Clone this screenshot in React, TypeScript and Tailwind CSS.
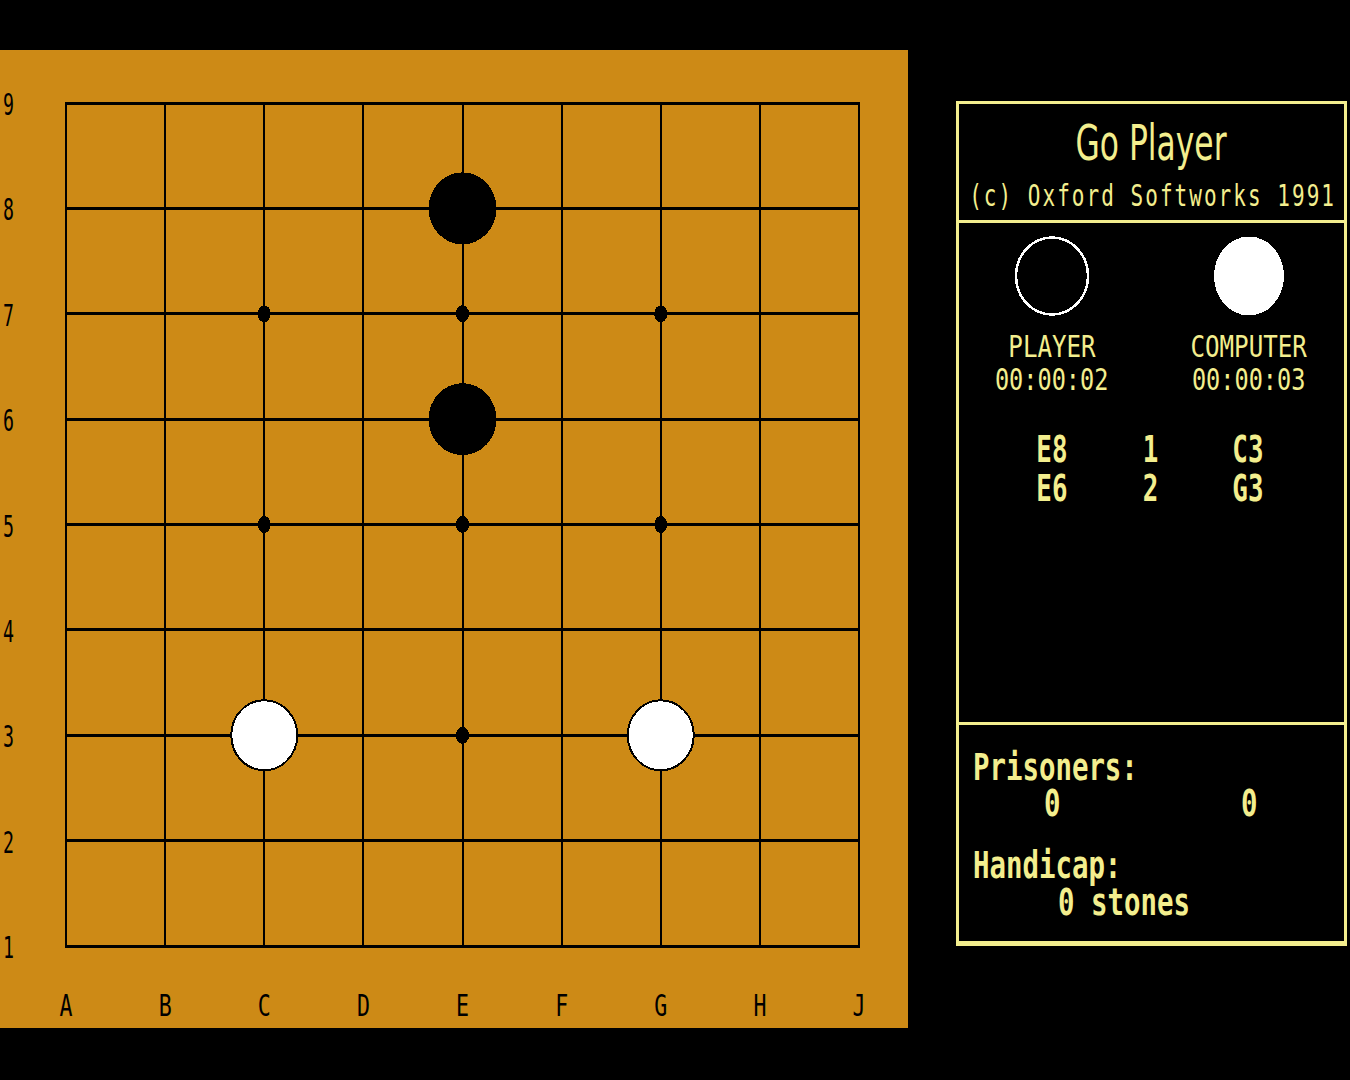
import React from "react"

const COLS = ["A", "B", "C", "D", "E", "F", "G", "H", "J"]
const X0 = 66
const DX = 99.125
const Y0 = 53
const DY = 105.375

const colX = (i: number) => X0 + i * DX
const rowY = (n: number) => Y0 + (9 - n) * DY

const hoshi = [
  [2, 7], [4, 7], [6, 7],
  [2, 5], [4, 5], [6, 5],
  [4, 3],
]

const stones: { c: number; r: number; color: "black" | "white" }[] = [
  { c: 4, r: 8, color: "black" },
  { c: 4, r: 6, color: "black" },
  { c: 2, r: 3, color: "white" },
  { c: 6, r: 3, color: "white" },
]

const mono = "font-['DejaVu_Sans_Mono','Liberation_Mono',monospace]"

function Board() {
  return (
    <div className="h-[978px] w-[908px] shrink-0 bg-[#cd8a16]">
      <svg width="908" height="978" viewBox="0 0 908 978" shapeRendering="crispEdges">
        {/* grid */}
        {COLS.map((_, i) => (
          <line key={"v" + i} x1={colX(i)} y1={Y0 - 1.5} x2={colX(i)} y2={rowY(1) + 1.5} stroke="#000" strokeWidth={2} />
        ))}
        {COLS.map((_, i) => (
          <line key={"h" + i} x1={X0 - 1} y1={rowY(i + 1)} x2={colX(8) + 1} y2={rowY(i + 1)} stroke="#000" strokeWidth={3} />
        ))}
        {hoshi.map(([c, r]) => (
          <ellipse key={`${c}-${r}`} cx={colX(c)} cy={rowY(r)} rx={6.5} ry={8.5} fill="#000" />
        ))}
        {stones.map((s) =>
          s.color === "black" ? (
            <ellipse key={`${s.c}-${s.r}`} cx={colX(s.c)} cy={rowY(s.r)} rx={34} ry={36} fill="#000" />
          ) : (
            <ellipse key={`${s.c}-${s.r}`} cx={colX(s.c)} cy={rowY(s.r)} rx={33} ry={35} fill="#fff" stroke="#000" strokeWidth={2} />
          )
        )}
        {/* row numbers */}
        {COLS.map((_, i) => (
          <text
            key={"n" + i}
            x={3}
            y={rowY(i + 1) + 12}
            textLength={11}
            lengthAdjust="spacingAndGlyphs"
            fontFamily="DejaVu Sans Mono, monospace"
            fontSize={31}
            fill="#000"
          >
            {i + 1}
          </text>
        ))}
        {/* column letters */}
        {COLS.map((l, i) => (
          <text
            key={"l" + i}
            x={colX(i) - 6.5}
            y={966}
            textLength={13}
            lengthAdjust="spacingAndGlyphs"
            fontFamily="DejaVu Sans Mono, monospace"
            fontSize={31}
            fill="#000"
          >
            {l}
          </text>
        ))}
      </svg>
    </div>
  )
}

function Cell({ children, className = "" }: { children: React.ReactNode; className?: string }) {
  return <div className={`flex w-[90px] justify-center ${className}`}>{children}</div>
}

function Panel() {
  return (
    <div className="ml-[48px] mt-[51px] flex h-[845px] w-[391px] flex-col border-x-[3px] border-t-[3px] border-b-[5px] border-[#f3ee8e] text-[#f3ee8e]">
      {/* header */}
      <div className="flex h-[119px] shrink-0 flex-col items-center border-b-[3px] border-[#f3ee8e]">
        <span className="mt-[15px] inline-block scale-x-[0.64] font-['DejaVu_Sans',sans-serif] text-[49px] leading-[49px] whitespace-nowrap">
          Go Player
        </span>
        <span className={`mt-[13px] inline-block scale-x-[0.7] pl-[3px] tracking-[2.9px] ${mono} text-[30px] leading-[30px] whitespace-nowrap`}>
          (c) Oxford Softworks 1991
        </span>
      </div>

      {/* players */}
      <div className={`flex h-[502px] shrink-0 flex-col border-b-[3px] border-[#f3ee8e] ${mono}`}>
        <div className="mt-[12px] flex pl-[48px] gap-[107px]">
          <Cell>
            <svg width="78" height="82" viewBox="0 0 78 82" shapeRendering="crispEdges">
              <ellipse cx="39" cy="41" rx="36" ry="38.5" fill="none" stroke="#fff" strokeWidth="2.5" />
            </svg>
          </Cell>
          <Cell>
            <svg width="78" height="82" viewBox="0 0 78 82" shapeRendering="crispEdges">
              <ellipse cx="39" cy="41" rx="35" ry="39.5" fill="#fff" />
            </svg>
          </Cell>
        </div>
        <div className="mt-[13px] flex pl-[48px] gap-[107px] text-[31px] leading-[33px]">
          <Cell>
            <span className="inline-block scale-x-[0.78]">PLAYER</span>
          </Cell>
          <Cell>
            <span className="inline-block scale-x-[0.78]">COMPUTER</span>
          </Cell>
        </div>
        <div className="flex pl-[48px] gap-[107px] text-[31px] leading-[33px]">
          <Cell>
            <span className="inline-block scale-x-[0.76]">00:00:02</span>
          </Cell>
          <Cell>
            <span className="inline-block scale-x-[0.76]">00:00:03</span>
          </Cell>
        </div>
        <div className="mt-[34px] flex flex-col text-[38px] leading-[39px] font-bold">
          {[
            ["E8", "1", "C3"],
            ["E6", "2", "G3"],
          ].map((row) => (
            <div key={row[1]} className="flex pl-[48px] gap-[8px]">
              {row.map((t, i) => (
                <Cell key={i}>
                  <span className="inline-block scale-x-[0.68]">{t}</span>
                </Cell>
              ))}
            </div>
          ))}
        </div>
      </div>

      {/* prisoners / handicap */}
      <div className={`flex flex-1 flex-col pl-[14px] ${mono} font-bold text-[37px] leading-[38px]`}>
        <span className="mt-[24px] inline-block origin-left scale-x-[0.74] whitespace-nowrap">Prisoners:</span>
        <div className="-mt-[2px] flex pl-[34px] gap-[107px]">
          <Cell>
            <span className="inline-block scale-x-[0.74]">0</span>
          </Cell>
          <Cell>
            <span className="inline-block scale-x-[0.74]">0</span>
          </Cell>
        </div>
        <span className="mt-[24px] inline-block origin-left scale-x-[0.74] whitespace-nowrap">Handicap:</span>
        <span className="-mt-[1px] ml-[85px] inline-block origin-left scale-x-[0.74] whitespace-nowrap">0 stones</span>
      </div>
    </div>
  )
}

export default function App() {
  return (
    <div className="flex h-[1080px] w-[1350px] overflow-hidden bg-black pt-[50px]">
      <Board />
      <Panel />
    </div>
  )
}
